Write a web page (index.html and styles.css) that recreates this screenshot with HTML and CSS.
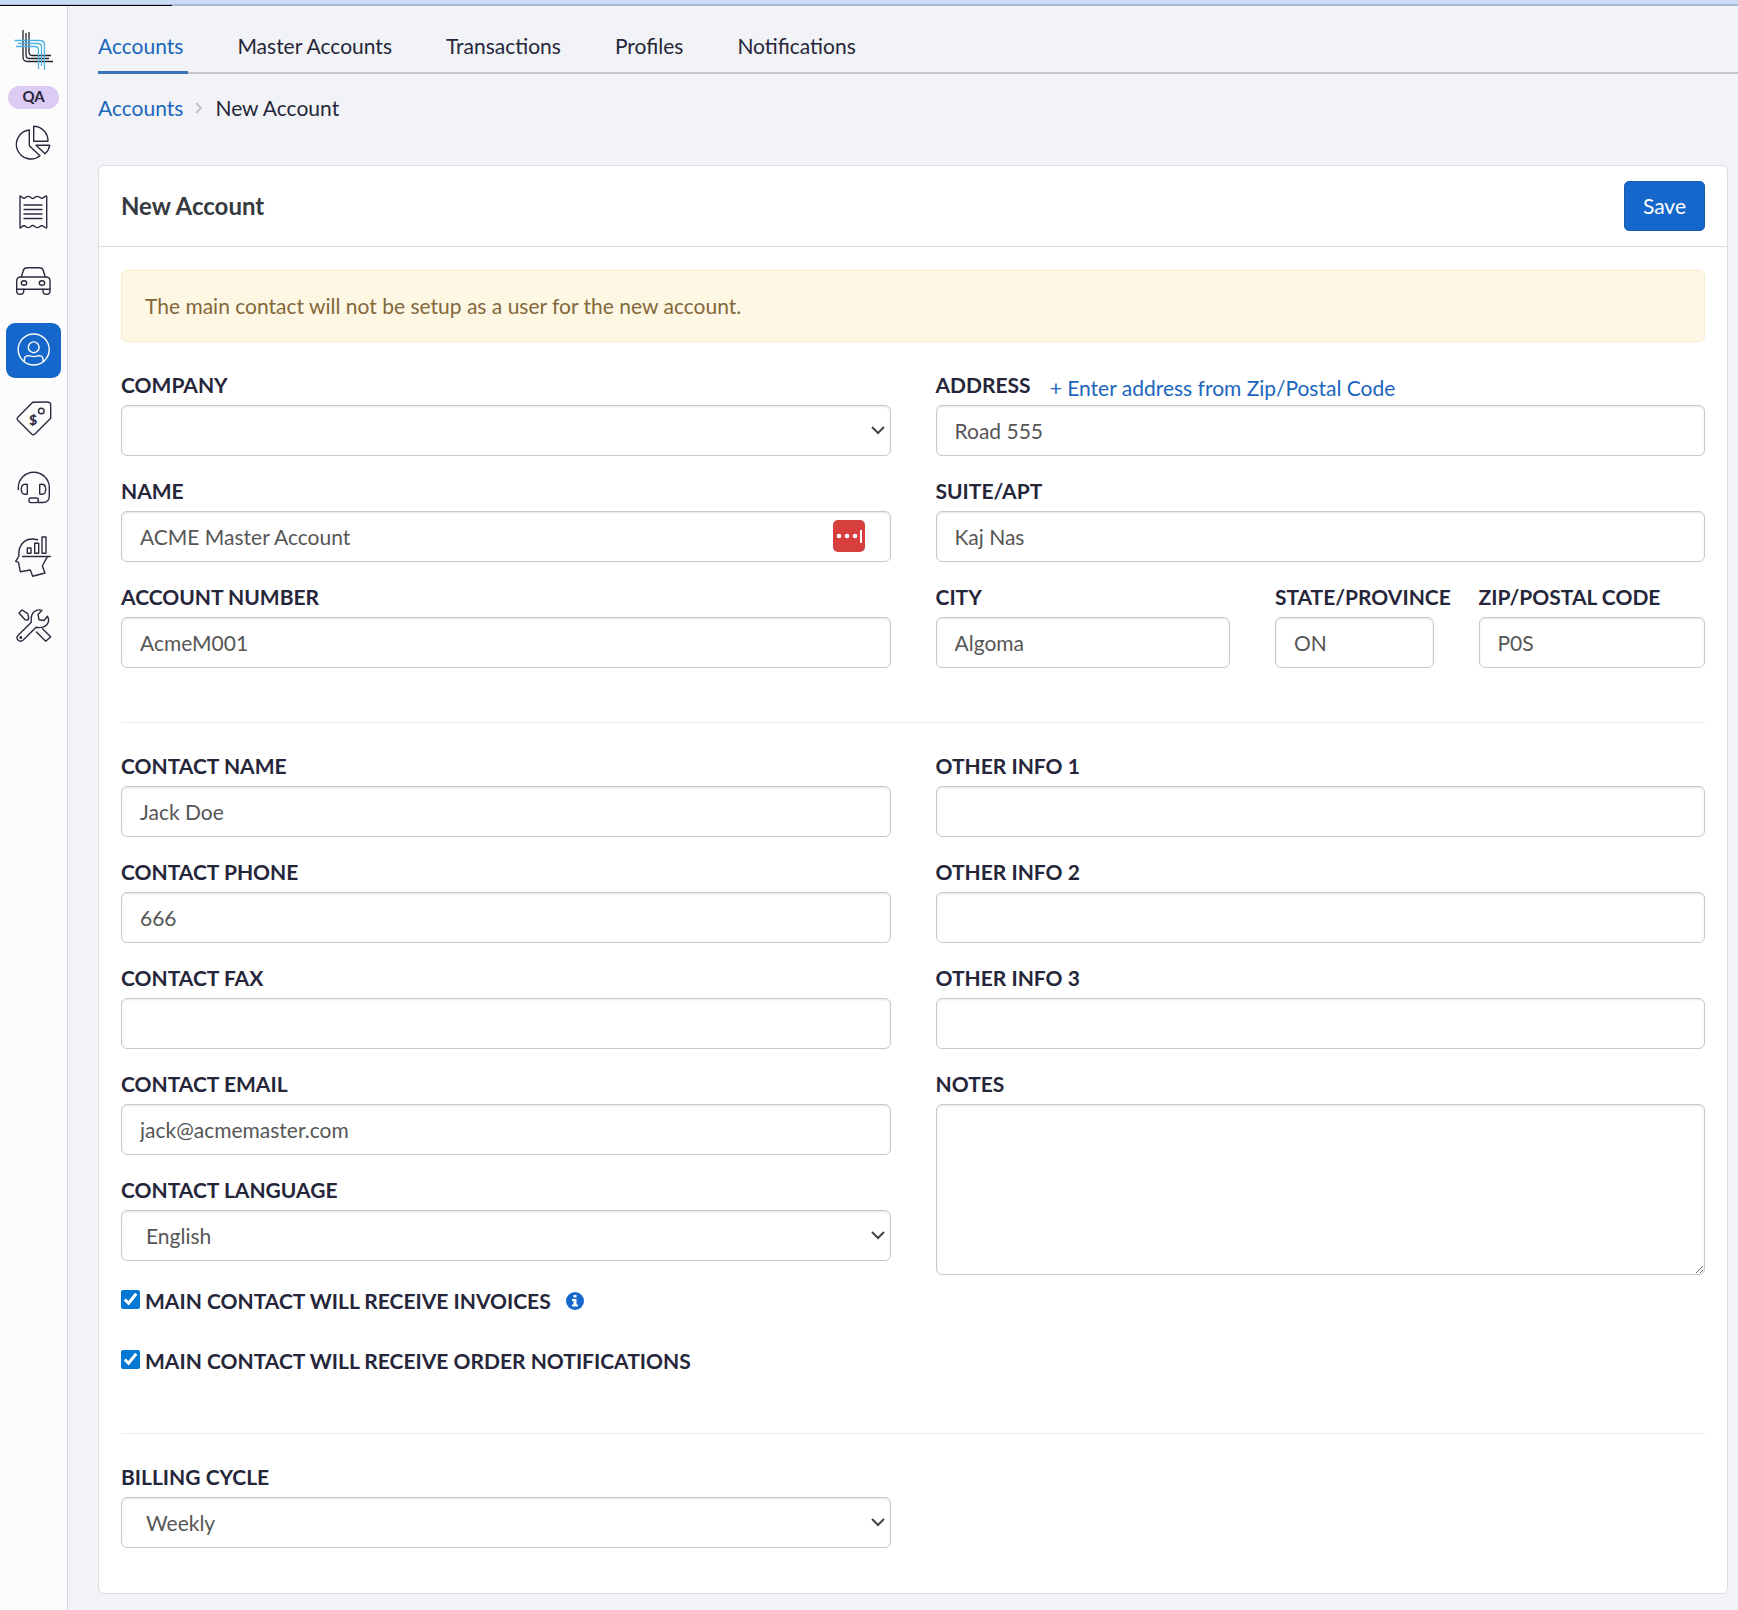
FILE: index.html
```html
<!DOCTYPE html>
<html lang="en">
<head>
<meta charset="UTF-8">
<meta name="viewport" content="width=device-width, initial-scale=1.0">
<title>New Account</title>
<link rel="stylesheet" href="styles.css">
</head>
<body>
<div class="top-strip"><div class="progress"></div></div>
<div class="app">
    <aside class="sidebar">
        <a href="#" class="logo" aria-label="Home">
            <svg width="40" height="42" viewBox="0 0 40 42">
                <g class="logo-dark">
                    <path d="M9 1v27q0 4.500 4.500 4.500H39"/>
                    <path d="M12 4v22q0 3.500 3.500 3.500H35"/>
                    <path d="M15 3v20q0 3.500 3.500 3.500H37"/>
                </g>
                <g class="logo-blue">
                    <path d="M.5 11.500H26q4.500 0 4.500 4.500v25"/>
                    <path d="M4 14.500h20q3.500 0 3.500 3.500v19"/>
                    <path d="M2 17.500h19q3.500 0 3.500 3.500v19"/>
                </g>
            </svg>
        </a>
        <span class="env">QA</span>
        <nav class="side-nav">
            <a href="#" class="side-link" aria-label="Dashboard">
                <svg viewBox="0 0 39 39"><path d="M15.300 6v15.700l10.700 10A14.500 14.500 0 1 1 15.300 6z"/><path d="M19.700 2.300v15H34A14.500 14.500 0 0 0 19.700 2.300z"/><path d="M22 21.300h13.700A14 14 0 0 1 31 29.700z"/></svg>
            </a>
            <a href="#" class="side-link" aria-label="Orders">
                <svg viewBox="0 0 39 39"><path d="M6 3.500Q6 2.500 7 3.500 10 6.500 12 4.300 14.300 2.500 16.500 4.300 18.800 6.500 21 4.300 23.300 2.500 25.500 4.300 28 6.500 31 3.500 32.700 2.500 32.700 3.500V34.500Q32.700 35.500 31 34.500 28 31.500 25.500 33.700 23.300 35.500 21 33.700 18.800 31.500 16.500 33.700 14.300 35.500 12 33.700 10 31.500 7 34.500 6 35.500 6 34.500z"/><path d="M10 12h18M10 16.500h18M10 21h18M10 25.500h18"/></svg>
            </a>
            <a href="#" class="side-link" aria-label="Vehicles">
                <svg viewBox="0 0 39 39"><path d="M7.300 15l2-6.500q.9-2.800 4-2.800h12q3.200 0 4 2.800l1.900 6.500"/><path d="M2.700 15.800M2.700 27.300V19q0-4 4-4H32q4 0 4 4v8.300z"/><ellipse cx="10" cy="21" rx="2.700" ry="2.300"/><ellipse cx="28" cy="21" rx="2.700" ry="2.300"/><path d="M2.700 27.300v2q0 3 3.500 3t3.500-3v-2M29 27.300v2q0 3 3.500 3t3.500-3v-2"/></svg>
            </a>
            <a href="#" class="side-link active" aria-label="Accounts">
                <svg viewBox="0 0 39 39"><circle cx="19.700" cy="18.500" r="15.500"/><circle cx="19.700" cy="16.300" r="5.400"/><path d="M10.300 30.500v-1.500q0-4 3.700-4.400 1.500 0 3 .6 2.700.9 5.400 0 1.500-.6 3-.6 3.700.4 3.700 4.400v1.500"/></svg>
            </a>
            <a href="#" class="side-link" aria-label="Pricing">
                <svg viewBox="0 0 39 39"><path d="M18.700 2.300L33 2q3.700 0 3.700 3v13.200L21 34q-1.700 1.700-3.400 0L3.600 20q-1.200-1.300 0-2.600z"/><circle cx="27.300" cy="11" r="2.800"/><text x="19" y="24.500" class="tag-sign">$</text></svg>
            </a>
            <a href="#" class="side-link" aria-label="Support">
                <svg viewBox="0 0 39 39"><path d="M4.300 20.500V18.500A15.500 15.200 0 0 1 35.300 18.500V27q0 6.500-6.500 6.500h-4.500"/><path d="M13.300 15.500v9.500q-5.300 1-5.700-2.500-.7-2.500 0-4.500.7-3.500 5.700-2.500zM25.700 15.500v9.500q5.300 1 5.700-2.500.7-2.500 0-4.500-.7-3.500-5.700-2.500z"/><rect x="15" y="29" width="9.300" height="4.600" rx="2"/></svg>
            </a>
            <a href="#" class="side-link" aria-label="Insights">
                <svg viewBox="0 0 39 39"><path d="M23.500 1.700Q10-1.500 5.500 10.500 4.500 14 4.900 18L1.700 23.300l2.800 1 1.800 9.400 10-1.700 2.400 6.300L31 35l-2.700-7L33 19.300"/><path d="M8.700 18.500h27.600M13.300 10h3.700v5.300h-3.700zM20.700 5.300h4v10h-4zM28-1h4v16.300h-4z"/></svg>
            </a>
            <a href="#" class="side-link" aria-label="Settings">
                <svg viewBox="0 0 39 39"><path d="M4.200 28.200L17.300 15.300Q16.500 8 20 4.800 23.500 2 28 3.300L24 7.500l1 5.200 5 .8 3.500-4.200Q36 13.500 33 17.500 29.500 21.500 22 20.300L9.300 33Q6.500 35.500 4 33 1.700 30.500 4.200 28.200z"/><circle cx="6.800" cy="30.600" r=".8"/><path d="M5 6l3-3 5.700 3.700 1 4L14 13l-3-.3zM22.500 25l9.200 9.300 5-4.600-8.200-8"/></svg>
            </a>
        </nav>
    </aside>

    <main class="main">
        <nav class="tabs">
            <a href="#" class="tab active">Accounts</a>
            <a href="#" class="tab">Master Accounts</a>
            <a href="#" class="tab">Transactions</a>
            <a href="#" class="tab">Profiles</a>
            <a href="#" class="tab">Notifications</a>
        </nav>
        <div class="breadcrumb">
            <a href="#">Accounts</a>
            <svg width="8" height="12" viewBox="0 0 8 12"><path d="M1 1l5 5-5 5"/></svg>
            <span>New Account</span>
        </div>

        <form class="card">
            <div class="card-header">
                <h1>New Account</h1>
                <button type="button" class="btn-save">Save</button>
            </div>
            <div class="card-body">
                <div class="alert">The main contact will not be setup as a user for the new account.</div>

                <div class="columns">
                    <div class="column">
                        <div class="field">
                            <label for="company">Company</label>
                            <select id="company"><option></option></select>
                        </div>
                        <div class="field">
                            <label for="name">Name</label>
                            <div class="input-wrap">
                                <input type="text" id="name" value="ACME Master Account">
                                <button type="button" class="fill-btn" aria-label="Fill">
                                    <svg width="32" height="32" viewBox="0 0 32 32"><rect width="32" height="32" rx="5" fill="#d63f3b"/><g fill="#fff"><circle cx="6" cy="16" r="2.300"/><circle cx="14" cy="16" r="2.300"/><circle cx="22" cy="16" r="2.300"/><rect x="27" y="10" width="2" height="13"/></g></svg>
                                </button>
                            </div>
                        </div>
                        <div class="field">
                            <label for="accountNumber">Account Number</label>
                            <input type="text" id="accountNumber" value="AcmeM001">
                        </div>
                    </div>
                    <div class="column">
                        <div class="field">
                            <div class="label-row">
                                <label for="address">Address</label>
                                <a href="#">+ Enter address from Zip/Postal Code</a>
                            </div>
                            <input type="text" id="address" value="Road 555">
                        </div>
                        <div class="field">
                            <label for="suite">Suite/Apt</label>
                            <input type="text" id="suite" value="Kaj Nas">
                        </div>
                        <div class="city-row">
                            <div class="field city">
                                <label for="city">City</label>
                                <input type="text" id="city" value="Algoma">
                            </div>
                            <div class="field state">
                                <label for="state">State/Province</label>
                                <input type="text" id="state" value="ON">
                            </div>
                            <div class="field zip">
                                <label for="zip">Zip/Postal Code</label>
                                <input type="text" id="zip" value="P0S">
                            </div>
                        </div>
                    </div>
                </div>

                <hr>

                <div class="columns">
                    <div class="column">
                        <div class="field">
                            <label for="contactName">Contact Name</label>
                            <input type="text" id="contactName" value="Jack Doe">
                        </div>
                        <div class="field">
                            <label for="contactPhone">Contact Phone</label>
                            <input type="text" id="contactPhone" value="666">
                        </div>
                        <div class="field">
                            <label for="contactFax">Contact Fax</label>
                            <input type="text" id="contactFax">
                        </div>
                        <div class="field">
                            <label for="contactEmail">Contact Email</label>
                            <input type="text" id="contactEmail" value="jack@acmemaster.com">
                        </div>
                        <div class="field">
                            <label for="language">Contact Language</label>
                            <select id="language"><option>English</option></select>
                        </div>
                        <div class="checks">
                            <div class="check">
                                <input type="checkbox" id="invoices" checked>
                                <label for="invoices">Main contact will receive invoices</label>
                                <svg class="info" width="18" height="18" viewBox="0 0 18 18"><circle cx="9" cy="9" r="9" fill="#1567cb"/><path d="M7.500 3h3v2.500h-3zM6 7h4.500v5.500H12V14.500H6v-2h1.500V9H6z" fill="#fff"/></svg>
                            </div>
                            <div class="check">
                                <input type="checkbox" id="notifications" checked>
                                <label for="notifications">Main contact will receive order notifications</label>
                            </div>
                        </div>
                    </div>
                    <div class="column">
                        <div class="field">
                            <label for="other1">Other Info 1</label>
                            <input type="text" id="other1">
                        </div>
                        <div class="field">
                            <label for="other2">Other Info 2</label>
                            <input type="text" id="other2">
                        </div>
                        <div class="field">
                            <label for="other3">Other Info 3</label>
                            <input type="text" id="other3">
                        </div>
                        <div class="field">
                            <label for="notes">Notes</label>
                            <textarea id="notes"></textarea>
                        </div>
                    </div>
                </div>

                <hr>

                <div class="columns">
                    <div class="field">
                        <label for="billing">Billing Cycle</label>
                        <select id="billing"><option>Weekly</option></select>
                    </div>
                </div>
            </div>
        </form>
    </main>
</div>
</body>
</html>
```

FILE: styles.css
```css
* {
    box-sizing: border-box;
}

body {
    margin: 0;
    min-height: 100vh;
    display: flex;
    flex-direction: column;
    background: #f1f3f7;
    color: #26263a;
    font-family: Lato, sans-serif;
    font-size: 21px;
    line-height: 30px;
}

a {
    color: #1b66bd;
    text-decoration: none;
}

/* loading bar */
.top-strip {
    height: 6px;
    background: #c9dbf5;
    box-shadow: inset 0 -2px 0 #a9b9d1;
}

.progress {
    width: 172px;
    height: 6px;
    border-bottom: 1px solid #000;
}

.app {
    display: flex;
    flex: 1;
}

/* sidebar */
.sidebar {
    width: 68px;
    flex-shrink: 0;
    padding: 23px 6px 0;
    background: #fcfcfc;
    border-right: 1px solid #d3d4d8;
    display: flex;
    flex-direction: column;
    align-items: center;
}

.logo,
.logo svg,
.side-link svg {
    display: block;
}

.logo path {
    fill: none;
    stroke-width: 1.3;
}

.logo-dark {
    stroke: #23232f;
}

.logo-blue {
    stroke: #4fb2e0;
}

.env {
    width: 51px;
    height: 23px;
    margin: 15px 0 7px;
    border-radius: 12px;
    background: #dccbf3;
    font-size: 15px;
    line-height: 21px;
    font-weight: 700;
    text-align: center;
}

.side-nav {
    display: flex;
    flex-direction: column;
    gap: 14px;
}

.side-link {
    width: 55px;
    height: 55px;
    padding: 8px;
    border-radius: 9px;
    color: #2b2b40;
}

.side-link.active {
    background: #1567cb;
    color: #fff;
}

.side-link svg {
    width: 39px;
    height: 39px;
    overflow: visible;
    fill: none;
    stroke: currentColor;
    stroke-width: 1.4;
    stroke-linejoin: round;
    stroke-linecap: round;
}

.tag-sign {
    fill: currentColor;
    stroke: none;
    font-size: 14px;
    font-weight: 900;
    text-anchor: middle;
}

/* main */
.main {
    flex: 1;
    min-width: 0;
    padding-left: 30px;
}

.tabs {
    display: flex;
    gap: 49px;
    border-bottom: 2px solid #c6c7ca;
}

.tab {
    padding: 25px 5px 10px 0;
    margin-bottom: -2px;
    border-bottom: 3px solid transparent;
    color: #26263a;
}

.tab.active {
    color: #1b66bd;
    border-bottom-color: #3a73b8;
}

.breadcrumb {
    display: flex;
    align-items: center;
    gap: 12px;
    padding: 19px 0 42px;
}

.breadcrumb path {
    fill: none;
    stroke: #c2c4c9;
    stroke-width: 2;
}

.card {
    margin: 0 10px 16px 0;
    background: #fff;
    border: 1px solid #dcdde0;
    border-radius: 6px;
}

.card-header {
    display: flex;
    align-items: center;
    justify-content: space-between;
    height: 81px;
    padding: 0 22px;
    border-bottom: 1px solid #dcdde0;
}

.card-header h1 {
    margin: 0;
    font-size: 24px;
    font-weight: 700;
    color: #343a40;
}

.btn-save {
    height: 50px;
    padding: 0 18px;
    border: 1px solid #1b5cae;
    border-radius: 5px;
    background: #1567cb;
    color: #fff;
    font: inherit;
}

.card-body {
    padding: 23px 22px 45px;
}

.alert {
    padding: 20px 23px;
    margin-bottom: 28px;
    border: 1px solid #f8ebc8;
    border-radius: 6px;
    background: #fdf7e3;
    color: #84673a;
}

.columns {
    display: grid;
    grid-template-columns: 1fr 1fr;
    gap: 45px;
}

.column {
    display: flex;
    flex-direction: column;
    gap: 20px;
}

.field {
    display: flex;
    flex-direction: column;
    min-width: 0;
}

label {
    margin-bottom: 5px;
    font-weight: 700;
    text-transform: uppercase;
    white-space: nowrap;
}

.label-row {
    display: flex;
    gap: 19px;
    line-height: 35px;
}

.label-row label {
    line-height: 30px;
}

input[type="text"],
select,
textarea {
    width: 100%;
    height: 51px;
    padding: 0 18px;
    border: 1px solid #c8c9cb;
    border-radius: 6px;
    background-color: #fff;
    box-shadow: inset 0 1px 2px rgba(0, 0, 0, 0.1);
    color: #565656;
    font: inherit;
}

select {
    appearance: none;
    padding: 0 24px;
    background-image: url("data:image/svg+xml,%3Csvg xmlns='http://www.w3.org/2000/svg' width='14' height='9' viewBox='0 0 14 9'%3E%3Cpath d='M1 1l6 6 6-6' fill='none' stroke='%23444' stroke-width='2'/%3E%3C/svg%3E");
    background-repeat: no-repeat;
    background-position: right 5px center;
}

textarea {
    display: block;
    height: 171px;
    resize: vertical;
}

.input-wrap {
    position: relative;
}

/* password manager button over the input */
.fill-btn {
    position: absolute;
    top: 9px;
    right: 26px;
    padding: 0;
    border: 0;
    background: none;
}

.fill-btn svg {
    display: block;
}

.city-row {
    display: grid;
    grid-template-columns: repeat(12, minmax(0, 1fr));
    gap: 45px;
}

.city {
    grid-column: span 5;
}

.state {
    grid-column: span 3;
}

.zip {
    grid-column: span 4;
}

hr {
    margin: 54px 0 28px;
    border: 0;
    border-top: 1px solid #ebebed;
}

.checks {
    display: flex;
    flex-direction: column;
    gap: 30px;
    padding: 5px 0 3px;
}

.check {
    display: flex;
    align-items: center;
}

.check input {
    width: 19px;
    height: 19px;
    margin: 0 5px 4px 0;
    accent-color: #0078d4;
}

.check label {
    margin: 0;
}

.info {
    margin-left: 15px;
}
```
